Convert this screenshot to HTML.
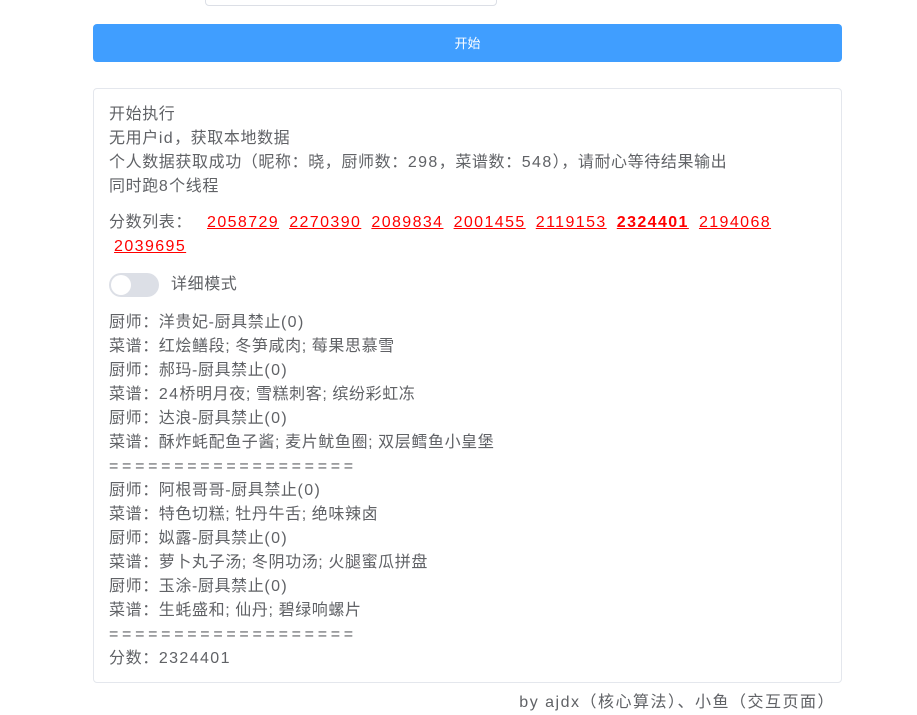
<!DOCTYPE html>
<html><head><meta charset="utf-8"><style>
body{margin:0;width:917px;height:715px;background:#fff;font-family:"Liberation Sans","Noto Sans CJK SC",sans-serif;color:#606266;position:relative;overflow:hidden}
.inp{position:absolute;left:205px;top:-30px;width:290px;height:34px;border:1px solid #dcdfe6;border-radius:4px}
.btn{position:absolute;left:93px;top:24px;width:749px;height:38px;background:#409eff;border-radius:4px;color:#fff;font-size:13px;text-align:center;line-height:40px}
.card{position:absolute;left:93px;top:88px;width:747px;height:593px;border:1px solid #e4e7ed;border-radius:4px}
.t{position:absolute;left:15px;font-size:16px;line-height:24px;white-space:nowrap;letter-spacing:0.6px}
.n{letter-spacing:1.4px}
.eq{letter-spacing:3.7px}
a{color:#f00;text-decoration:underline;letter-spacing:1.4px}
.tg{position:absolute;left:15px;top:184px;width:50px;height:24px;border-radius:12px;background:#dcdfe6}
.tg:after{content:"";position:absolute;left:2px;top:2px;width:20px;height:20px;border-radius:50%;background:#fff}
.foot{position:absolute;right:82px;top:691px;font-size:16px;line-height:24px;letter-spacing:1.5px}
</style></head><body>
<div class="inp"></div>
<div class="btn">开始</div>
<div class="card">
<div class="t" style="top:14px">开始执行<br>无用户<span class="n">id</span>，获取本地数据<br>个人数据获取成功（昵称：晓，厨师数：<span class="n">298</span>，菜谱数：<span class="n">548</span>），请耐心等待结果输出<br>同时跑<span class="n">8</span>个线程</div>
<div class="t" style="top:122px">分数列表：<span style="display:inline-block;width:15px"></span><a>2058729</a>&nbsp; <a>2270390</a>&nbsp; <a>2089834</a>&nbsp; <a>2001455</a>&nbsp; <a>2119153</a>&nbsp; <a style="font-weight:bold">2324401</a>&nbsp; <a>2194068</a><br>&nbsp;<a>2039695</a></div>
<div class="tg"></div>
<div class="t" style="top:184px;left:77px">详细模式</div>
<div class="t" style="top:222px">厨师：洋贵妃-厨具禁止<span class="n">(0)</span><br>菜谱：红烩鳝段; 冬笋咸肉; 莓果思慕雪<br>厨师：郝玛-厨具禁止<span class="n">(0)</span><br>菜谱：<span class="n">24</span>桥明月夜; 雪糕刺客; 缤纷彩虹冻<br>厨师：达浪-厨具禁止<span class="n">(0)</span><br>菜谱：酥炸蚝配鱼子酱; 麦片鱿鱼圈; 双层鳕鱼小皇堡<br><span class="eq">===================</span><br>厨师：阿根哥哥-厨具禁止<span class="n">(0)</span><br>菜谱：特色切糕; 牡丹牛舌; 绝味辣卤<br>厨师：姒露-厨具禁止<span class="n">(0)</span><br>菜谱：萝卜丸子汤; 冬阴功汤; 火腿蜜瓜拼盘<br>厨师：玉涂-厨具禁止<span class="n">(0)</span><br>菜谱：生蚝盛和; 仙丹; 碧绿响螺片<br><span class="eq">===================</span><br>分数：<span class="n">2324401</span></div>
</div>
<div class="foot">by ajdx（核心算法）、小鱼（交互页面）</div>
</body></html>
